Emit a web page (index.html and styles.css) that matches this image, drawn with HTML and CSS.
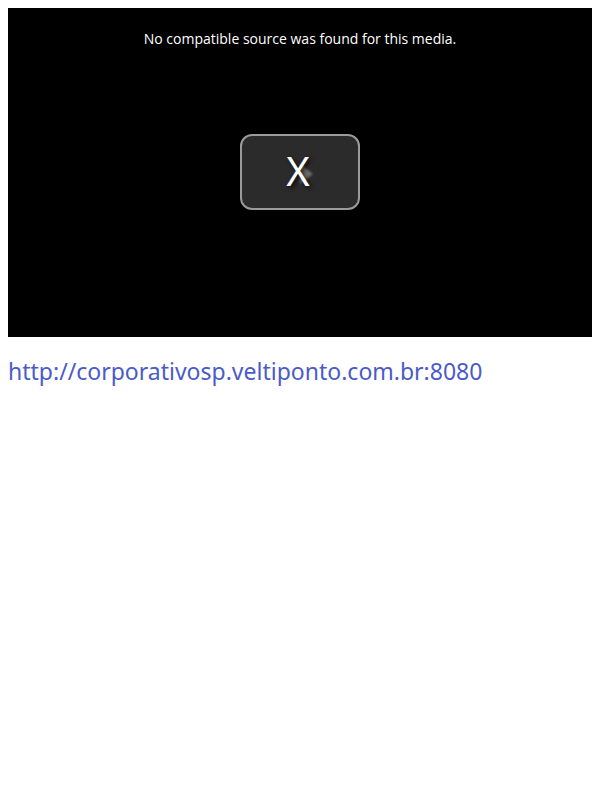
FILE: index.html
```html
<!DOCTYPE html>
<html>
<head>
<meta charset="utf-8">
<link rel="stylesheet" href="styles.css">
</head>
<body>
<div class="player">
  <div class="error">No compatible source was found for this media.</div>
  <div class="big-play">
    <svg class="tri" width="15" height="22" viewBox="0 0 15 22"><path d="M1 1 L14 11 L1 21 Z" fill="#6c6c6c"/></svg>
    <span class="x">X</span>
  </div>
</div>
<p class="link">http://corporativosp.veltiponto.com.br:8080</p>
</body>
</html>
```
FILE: styles.css
```css
body {
  margin: 8px;
  background: #fff;
  font-family: "Open Sans", "Noto Sans", sans-serif;
}
.player {
  position: relative;
  width: 584px;
  height: 329px;
  background: #000;
}
.error {
  padding-top: 21px;
  text-align: center;
  color: #fff;
  font-size: 14px;
  line-height: 20px;
}
.big-play {
  position: absolute;
  left: 232px;
  top: 126px;
  width: 116px;
  height: 72px;
  border: 2px solid #9a9a9a;
  border-radius: 12px;
  background: #2b2b2b;
  display: flex;
  align-items: center;
  justify-content: center;
}
.tri {
  position: absolute;
  left: 57px;
  top: 27px;
  filter: blur(0.8px);
}
.x {
  position: relative;
  left: -2px;
  top: -1px;
  color: #fff;
  font-family: "Noto Sans", sans-serif;
  font-size: 40px;
  line-height: 1;
  text-shadow: 2px 2px 4px rgba(0,0,0,0.8);
}
.link {
  margin: 19px 0 0 0;
  font-family: "Noto Sans", sans-serif;
  font-size: 23px;
  line-height: 30px;
  color: #4a5bc8;
}
```
